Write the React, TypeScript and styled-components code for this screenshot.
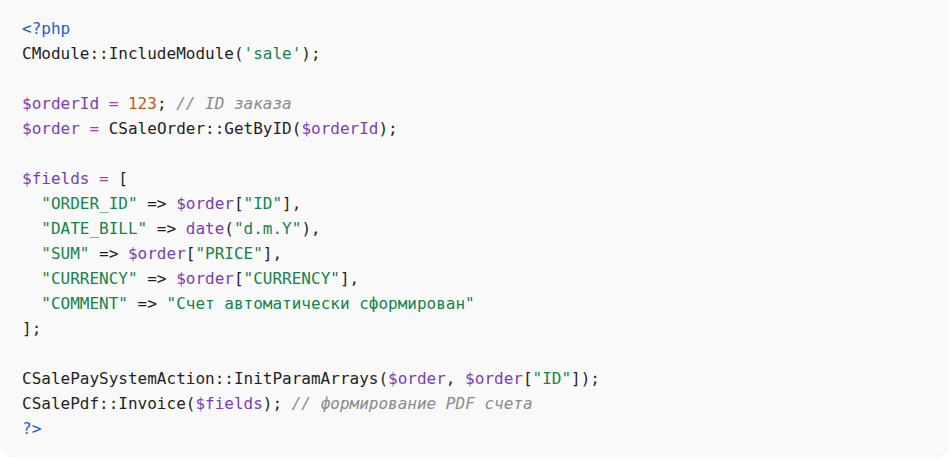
import React from "react";
import styled, { createGlobalStyle } from "styled-components";

const Global = createGlobalStyle`
  html, body { margin: 0; padding: 0; background: #ffffff; }
  #root { width: 949px; }
`;

type Kind = "plain" | "meta" | "var" | "num" | "str" | "com" | "op" | "fn";

const colors: Record<Kind, string> = {
  plain: "#1f1f1f",
  meta: "#1f5fc8",
  var: "#7a3eb5",
  num: "#c0571d",
  str: "#15834a",
  com: "#8a8a8a",
  op: "#a0439f",
  fn: "#7a3eb5",
};

const Block = styled.pre`
  margin: 0;
  box-sizing: border-box;
  width: 949px;
  height: 457px;
  padding: 16px 22px;
  background: #f9f9f9;
  border-radius: 0 0 16px 16px;
  box-shadow: 0 1px 0 #eeeeee;
  font-family: "DejaVu Sans Mono", "Liberation Mono", monospace;
  font-size: 16px;
  line-height: 25px;
  color: #1f1f1f;
  overflow: hidden;
`;

const Line = styled.div`
  height: 25px;
  white-space: pre;
`;

const Tok = styled.span<{ $k: Kind }>`
  color: ${(p) => colors[p.$k]};
  font-style: ${(p) => (p.$k === "com" ? "italic" : "normal")};
`;

type Seg = [Kind, string];

const lines: Seg[][] = [
  [["meta", "<?php"]],
  [["plain", "CModule::IncludeModule("], ["str", "'sale'"], ["plain", ");"]],
  [],
  [["var", "$orderId"], ["plain", " "], ["op", "="], ["plain", " "], ["num", "123"], ["plain", "; "], ["com", "// ID заказа"]],
  [["var", "$order"], ["plain", " "], ["op", "="], ["plain", " CSaleOrder::GetByID("], ["var", "$orderId"], ["plain", ");"]],
  [],
  [["var", "$fields"], ["plain", " "], ["op", "="], ["plain", " ["]],
  [["plain", "  "], ["str", "\"ORDER_ID\""], ["plain", " => "], ["var", "$order"], ["plain", "["], ["str", "\"ID\""], ["plain", "],"]],
  [["plain", "  "], ["str", "\"DATE_BILL\""], ["plain", " => "], ["fn", "date"], ["plain", "("], ["str", "\"d.m.Y\""], ["plain", "),"]],
  [["plain", "  "], ["str", "\"SUM\""], ["plain", " => "], ["var", "$order"], ["plain", "["], ["str", "\"PRICE\""], ["plain", "],"]],
  [["plain", "  "], ["str", "\"CURRENCY\""], ["plain", " => "], ["var", "$order"], ["plain", "["], ["str", "\"CURRENCY\""], ["plain", "],"]],
  [["plain", "  "], ["str", "\"COMMENT\""], ["plain", " => "], ["str", "\"Счет автоматически сформирован\""]],
  [["plain", "];"]],
  [],
  [["plain", "CSalePaySystemAction::InitParamArrays("], ["var", "$order"], ["plain", ", "], ["var", "$order"], ["plain", "["], ["str", "\"ID\""], ["plain", "]);"]],
  [["plain", "CSalePdf::Invoice("], ["var", "$fields"], ["plain", "); "], ["com", "// формирование PDF счета"]],
  [["meta", "?>"]],
];

export default function App() {
  return (
    <>
      <Global />
      <Block>
        {lines.map((segs, i) => (
          <Line key={i}>
            {segs.length === 0
              ? " "
              : segs.map(([k, t], j) => (
                  <Tok key={j} $k={k}>
                    {t}
                  </Tok>
                ))}
          </Line>
        ))}
      </Block>
    </>
  );
}
